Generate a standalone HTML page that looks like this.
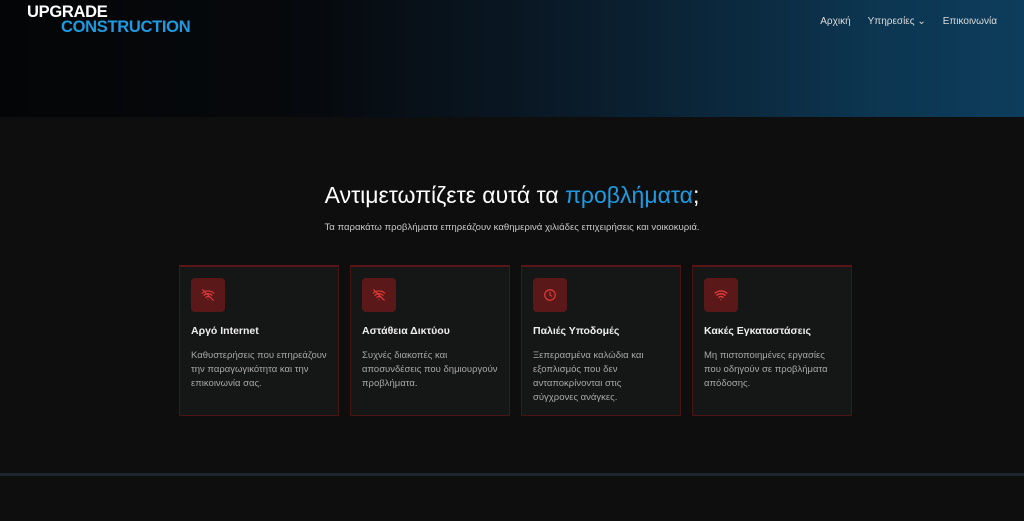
<!DOCTYPE html>
<html><head><meta charset="utf-8"><style>
*{margin:0;padding:0;box-sizing:border-box}
body{width:1024px;height:521px;overflow:hidden;background:#0e0e0e;font-family:"Liberation Sans",sans-serif;color:#ddd;position:relative}
.hero{position:absolute;left:0;top:0;width:1024px;height:117px;background:linear-gradient(90deg,#040506 0%,#06090d 30%,#0a1a28 55%,#0c3550 85%,#0d3d5c 100%)}
.logo{position:absolute;left:27px;top:5px;font-weight:bold;font-size:16.5px;line-height:15px;letter-spacing:-0.3px;z-index:2}
.logo .a{color:#fff}.logo .b{color:#1e9be0;margin-left:34px}
nav{position:absolute;top:16px;right:27px;font-size:10px;color:#ddd;z-index:2}
nav span{margin-left:17px}
.sec{position:absolute;top:117px;left:0;width:1024px;height:357px;background:#0e0e0e}
h1{position:absolute;top:182px;width:1024px;text-align:center;font-size:23px;font-weight:normal;color:#fff}
h1 b{color:#1e9be0;font-weight:normal}
.sub{position:absolute;top:222px;width:1024px;text-align:center;font-size:9.6px;color:#c8c8c8}
.card{position:absolute;top:265px;width:160px;height:151px;background:#151616;border:1px solid #4a1414;border-top:2px solid #5a1515}
.ic{position:absolute;left:11px;top:11px;width:34px;height:34px;background:#5a1818;border-radius:4px;display:flex;align-items:center;justify-content:center}
.t{position:absolute;left:11px;top:58px;font-size:10.5px;font-weight:bold;color:#eee}
.d{position:absolute;left:11px;top:82px;width:138px;font-size:9.5px;line-height:14px;color:#a8a8a8}
.line{position:absolute;top:473px;left:0;width:1024px;height:3px;background:#1c262c}
</style></head><body>
<div class="hero"></div>
<div class="logo"><div class="a">UPGRADE</div><div class="b">CONSTRUCTION</div></div>
<nav><span>Αρχική</span><span>Υπηρεσίες ⌄</span><span>Επικοινωνία</span></nav>
<div class="sec"></div>
<h1>Αντιμετωπίζετε αυτά τα <b>προβλήματα</b>;</h1>
<div class="sub">Τα παρακάτω προβλήματα επηρεάζουν καθημερινά χιλιάδες επιχειρήσεις και νοικοκυριά.</div>

<div class="card" style="left:179px"><div class="ic"><svg width="14" height="14" viewBox="0 0 24 24" fill="none" stroke="#e03a3a" stroke-width="2" stroke-linecap="round"><path d="M2 8.8a15 15 0 0120 0M5 12.5a10 10 0 0114 0M8.5 16a5 5 0 017 0M12 20h.01M3 3l18 18"/></svg></div><div class="t">Αργό Internet</div><div class="d">Καθυστερήσεις που επηρεάζουν την παραγωγικότητα και την επικοινωνία σας.</div></div>
<div class="card" style="left:350px"><div class="ic"><svg width="14" height="14" viewBox="0 0 24 24" fill="none" stroke="#e03a3a" stroke-width="2" stroke-linecap="round"><path d="M2 8.8a15 15 0 0120 0M5 12.5a10 10 0 0114 0M8.5 16a5 5 0 017 0M12 20h.01M3 3l18 18"/></svg></div><div class="t">Αστάθεια Δικτύου</div><div class="d">Συχνές διακοπές και αποσυνδέσεις που δημιουργούν προβλήματα.</div></div>
<div class="card" style="left:521px"><div class="ic"><svg width="14" height="14" viewBox="0 0 24 24" fill="none" stroke="#e03a3a" stroke-width="2" stroke-linecap="round"><circle cx="12" cy="12" r="9"/><path d="M12 7v5l3 2"/></svg></div><div class="t">Παλιές Υποδομές</div><div class="d">Ξεπερασμένα καλώδια και εξοπλισμός που δεν ανταποκρίνονται στις<br>σύγχρονες ανάγκες.</div></div>
<div class="card" style="left:692px"><div class="ic"><svg width="14" height="14" viewBox="0 0 24 24" fill="none" stroke="#e03a3a" stroke-width="2.4" stroke-linecap="round"><path d="M2 8.8a15 15 0 0120 0M5 12.5a10 10 0 0114 0M8.5 16a5 5 0 017 0M12 20h.01"/></svg></div><div class="t">Κακές Εγκαταστάσεις</div><div class="d">Μη πιστοποιημένες εργασίες που οδηγούν σε προβλήματα απόδοσης.</div></div>
<div class="line"></div>
</body></html>
